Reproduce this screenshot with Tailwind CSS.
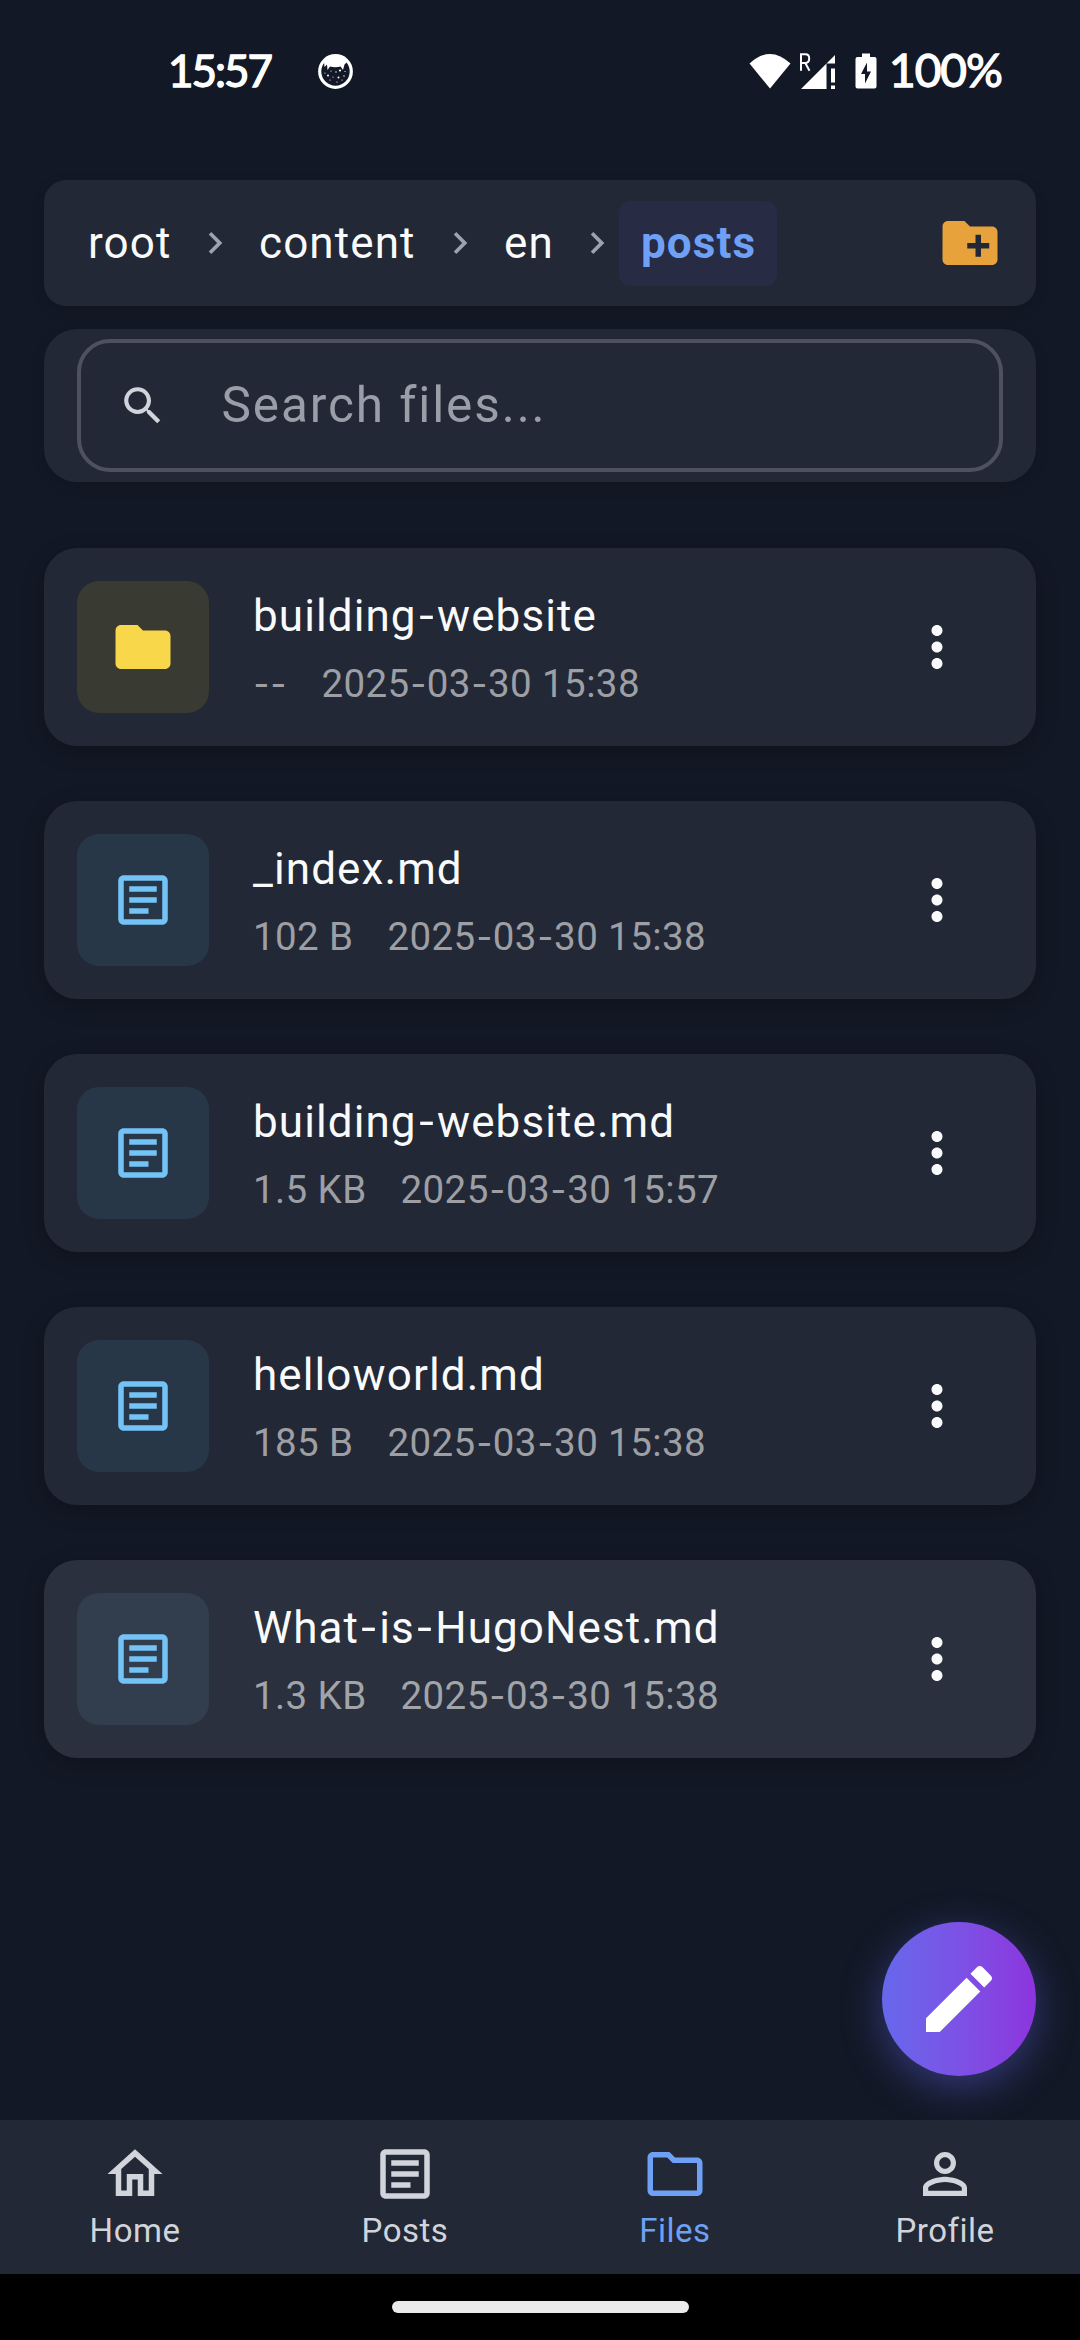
<!DOCTYPE html>
<html lang="en">
<head>
<meta charset="utf-8">
<title>Files</title>
<script src="https://cdn.jsdelivr.net/npm/@tailwindcss/browser@4"></script>
</head>
<body class="bg-[#121825]">
<svg class="hidden">
  <symbol id="article" viewBox="0 0 24 24"><path d="M19 5v14H5V5h14m0-2H5c-1.100 0-2 .9-2 2v14c0 1.100.9 2 2 2h14c1.100 0 2-.9 2-2V5c0-1.100-.9-2-2-2zM14 17H7v-2h7v2zm3-4H7v-2h10v2zm0-4H7V7h10v2z" fill="currentColor"/></symbol>
  <symbol id="more" viewBox="0 0 24 24"><path d="M12 8c1.100 0 2-.9 2-2s-.9-2-2-2-2 .9-2 2 .9 2 2 2zm0 2c-1.100 0-2 .9-2 2s.9 2 2 2 2-.9 2-2-.9-2-2-2zm0 6c-1.100 0-2 .9-2 2s.9 2 2 2 2-.9 2-2-.9-2-2-2z" fill="currentColor"/></symbol>
  <symbol id="chevron" viewBox="0 0 24 24"><path d="M10 6L8.590 7.410 13.170 12l-4.580 4.590L10 18l6-6z" fill="currentColor"/></symbol>
</svg>
<div class="relative flex h-[2340px] w-[1080px] flex-col overflow-hidden bg-[#121825] font-['Roboto',sans-serif] tracking-[0.4px] text-[#f9fafb]">

  <!-- Status bar -->
  <header class="flex h-[180px] shrink-0 items-start justify-between pt-[44px] pr-[74px] pl-[168px] font-['Lato',sans-serif] text-white">
    <div class="flex h-[54px] items-center">
      <span class="-mt-[2px] w-[149px] text-[44px] leading-[54px] font-normal tracking-[-2px] [-webkit-text-stroke:1.3px_white]">15:57</span>
      <svg class="size-[37px]" viewBox="0 0 37 37">
        <circle cx="18.500" cy="18.500" r="15.800" fill="none" stroke="white" stroke-width="3.200"/>
        <path d="M7 9Q18.500-3 30 9L27.500 11.500 26 17 23.500 13.500Q18.500 15 13 13.500L10.500 17 10 11.500 7.500 14Z" fill="white"/>
        <g fill="white"><circle cx="11" cy="22.500" r="1"/><circle cx="23" cy="17.500" r="1.100"/><circle cx="21.500" cy="24.500" r="1"/><circle cx="16" cy="24" r=".6"/><circle cx="19" cy="19" r=".7"/><circle cx="27" cy="23" r=".7"/><circle cx="13" cy="27" r=".6"/><circle cx="20" cy="29" r=".6"/><circle cx="14" cy="18" r=".6"/><circle cx="28" cy="18.500" r=".6"/><circle cx="8" cy="20" r=".6"/><circle cx="25" cy="27" r=".6"/></g>
      </svg>
    </div>
    <div class="flex h-[54px] items-center">
      <svg class="h-[36px] w-[42px]" viewBox="0 0 42 36"><path d="M.5 10.500Q21-8.500 41.500 10.500L21 35.500Z" fill="white"/></svg>
      <svg class="ml-[7px] h-[38px] w-[38px]" viewBox="0 0 38 38">
        <path d="M3 37L28.500 11.500V37ZM28.500 11.500L37 3V11.500Z" fill="white"/>
        <path d="M33 16.500h4v14h-4zM33 33.500h4V37h-4z" fill="white"/>
        <path d="M3 18.800V2.200H7.500Q11.200 2.200 11.200 6.500T7.500 11H3M7.300 11L11.500 18.800" fill="none" stroke="white" stroke-width="2"/>
      </svg>
      <svg class="ml-[19px] h-[36px] w-[22px]" viewBox="0 0 22 36"><path d="M7 .5h8V4h4.500Q21.500 4 21.500 6V33.500Q21.500 35.500 19.500 35.500H2.500Q.5 35.500 .5 33.500V6Q.5 4 2.500 4H7Z" fill="white"/><path d="M12 9.500L6 21h4v9.500L16 18.500h-4Z" fill="#121825"/></svg>
      <span class="-mt-[2px] ml-[12px] w-[117px] text-[46px] leading-[54px] font-normal tracking-[-1px] whitespace-nowrap [-webkit-text-stroke:1.3px_white]">100%</span>
    </div>
  </header>

  <!-- Breadcrumbs -->
  <nav class="mx-[44px] flex h-[126px] shrink-0 items-center rounded-[22px] bg-[#222835] px-[22px] text-[44px] leading-[52px] tracking-[1.1px] shadow-[0_4px_14px_rgba(0,0,0,0.12)]">
    <span class="w-[127px] px-[22px]">root</span>
    <svg class="size-[44px] text-[#9ca3af]"><use href="#chevron"/></svg>
    <span class="w-[201px] px-[22px]">content</span>
    <svg class="size-[44px] text-[#9ca3af]"><use href="#chevron"/></svg>
    <span class="w-[93px] px-[22px]">en</span>
    <svg class="size-[44px] text-[#9ca3af]"><use href="#chevron"/></svg>
    <span class="h-[85px] w-[158px] rounded-[11px] bg-[#272b44] px-[22px] leading-[85px] font-bold text-[#6ea1f5]">posts</span>
    <svg class="mr-[11px] ml-auto size-[66px]" viewBox="0 0 24 24"><path fill="#e8a23b" d="M20 6h-8l-2-2H4c-1.110 0-1.990.89-1.990 2L2 18c0 1.110.89 2 2 2h16c1.110 0 2-.89 2-2V8c0-1.110-.89-2-2-2zm-1 8h-3v3h-2v-3h-3v-2h3V9h2v3h3v2z"/></svg>
  </nav>

  <!-- Search -->
  <section class="mx-[44px] mt-[23px] h-[153px] shrink-0 rounded-[33px] bg-[#222835] px-[33px] py-[10px] shadow-[0_4px_14px_rgba(0,0,0,0.12)]">
    <div class="flex h-[133px] items-center rounded-[33px] border-4 border-[#4d525e] pl-[37px]">
      <svg class="size-[49.5px]" viewBox="0 0 24 24"><path fill="#d1d5db" d="M15.500 14h-.79l-.28-.27C15.410 12.590 16 11.110 16 9.500 16 5.910 13.090 3 9.500 3S3 5.910 3 9.500 5.910 16 9.500 16c1.610 0 3.090-.59 4.230-1.570l.27.28v.79l5 4.990L20.490 19l-4.990-5zm-6 0C7.010 14 5 11.990 5 9.500S7.010 5 9.500 5 14 7.010 14 9.500 11.990 14 9.500 14z"/></svg>
      <span class="-mt-[2px] ml-[54px] text-[49.5px] leading-[60px] tracking-[1.9px] text-[#9a9ea9]">Search files...</span>
    </div>
  </section>

  <!-- File list -->
  <main id="files" class="mx-[44px] mt-[66px] flex flex-col gap-[55px]">
    <article class="flex h-[198px] items-center rounded-[33px] bg-[#222835] px-[33px] shadow-[0_6px_22px_rgba(0,0,0,0.22)]">
      <div class="flex size-[132px] items-center justify-center rounded-[22px] bg-[#393a32]"><svg class="size-[66px]" viewBox="0 0 24 24"><path fill="#f8d74a" d="M10 4H4c-1.100 0-1.990.9-1.990 2L2 18c0 1.100.9 2 2 2h16c1.100 0 2-.9 2-2V8c0-1.100-.9-2-2-2h-8l-2-2z"/></svg></div>
      <div class="ml-[44px] flex-1"><h2 class="text-[44px] leading-[66px] tracking-[1.1px]">building-website</h2><p class="mt-[7px] flex gap-[34px] text-[38.5px] leading-[55px] text-[#9d9fa5]"><span>--</span><span>2025-03-30 15:38</span></p></div>
      <svg class="mr-[33px] size-[66px]"><use href="#more"/></svg>
    </article>
    <article class="flex h-[198px] items-center rounded-[33px] bg-[#222835] px-[33px] shadow-[0_6px_22px_rgba(0,0,0,0.22)]">
      <div class="flex size-[132px] items-center justify-center rounded-[22px] bg-[#283747] text-[#74c3f7]"><svg class="size-[66px]"><use href="#article"/></svg></div>
      <div class="ml-[44px] flex-1"><h2 class="text-[44px] leading-[66px] tracking-[1.1px]">_index.md</h2><p class="mt-[7px] flex gap-[34px] text-[38.5px] leading-[55px] text-[#9d9fa5]"><span>102 B</span><span>2025-03-30 15:38</span></p></div>
      <svg class="mr-[33px] size-[66px]"><use href="#more"/></svg>
    </article>
    <article class="flex h-[198px] items-center rounded-[33px] bg-[#222835] px-[33px] shadow-[0_6px_22px_rgba(0,0,0,0.22)]">
      <div class="flex size-[132px] items-center justify-center rounded-[22px] bg-[#283747] text-[#74c3f7]"><svg class="size-[66px]"><use href="#article"/></svg></div>
      <div class="ml-[44px] flex-1"><h2 class="text-[44px] leading-[66px] tracking-[1.1px]">building-website.md</h2><p class="mt-[7px] flex gap-[34px] text-[38.5px] leading-[55px] text-[#9d9fa5]"><span>1.5 KB</span><span>2025-03-30 15:57</span></p></div>
      <svg class="mr-[33px] size-[66px]"><use href="#more"/></svg>
    </article>
    <article class="flex h-[198px] items-center rounded-[33px] bg-[#222835] px-[33px] shadow-[0_6px_22px_rgba(0,0,0,0.22)]">
      <div class="flex size-[132px] items-center justify-center rounded-[22px] bg-[#283747] text-[#74c3f7]"><svg class="size-[66px]"><use href="#article"/></svg></div>
      <div class="ml-[44px] flex-1"><h2 class="text-[44px] leading-[66px] tracking-[1.1px]">helloworld.md</h2><p class="mt-[7px] flex gap-[34px] text-[38.5px] leading-[55px] text-[#9d9fa5]"><span>185 B</span><span>2025-03-30 15:38</span></p></div>
      <svg class="mr-[33px] size-[66px]"><use href="#more"/></svg>
    </article>
    <article class="flex h-[198px] items-center rounded-[33px] bg-[#2a303d] px-[33px] shadow-[0_6px_22px_rgba(0,0,0,0.22)]">
      <div class="flex size-[132px] items-center justify-center rounded-[22px] bg-[#323e4e] text-[#74c3f7]"><svg class="size-[66px]"><use href="#article"/></svg></div>
      <div class="ml-[44px] flex-1"><h2 class="text-[44px] leading-[66px] tracking-[1.1px]">What-is-HugoNest.md</h2><p class="mt-[7px] flex gap-[34px] text-[38.5px] leading-[55px] text-[#a1a4a9]"><span>1.3 KB</span><span>2025-03-30 15:38</span></p></div>
      <svg class="mr-[33px] size-[66px]"><use href="#more"/></svg>
    </article>
  </main>

  <!-- Floating edit button -->
  <button class="absolute top-[1922px] right-[44px] flex size-[154px] items-center justify-center rounded-full bg-linear-to-r from-[#6568ec] to-[#8c34de] shadow-[0_11px_42px_rgba(99,102,241,0.42)]">
    <svg class="size-[88px]" viewBox="0 0 24 24"><path fill="white" d="M3 17.250V21h3.750L17.810 9.940l-3.750-3.750L3 17.250zM20.710 7.040c.39-.39.39-1.020 0-1.410l-2.340-2.340c-.39-.39-1.020-.39-1.410 0l-1.830 1.830 3.750 3.750 1.830-1.830z"/></svg>
  </button>

  <!-- Bottom navigation -->
  <nav class="relative mt-auto grid h-[154px] shrink-0 grid-cols-4 bg-[#222835] pt-[21px] text-[33px] leading-[40px] tracking-[0.5px] text-[#d1d4da]">
    <a class="flex flex-col items-center gap-[4px]"><svg class="size-[66px]" viewBox="0 0 24 24"><path fill="currentColor" d="M12 5.690l5 4.500V18h-2v-6H9v6H7v-7.810l5-4.500M12 3L2 12h3v8h6v-6h2v6h6v-8h3L12 3z"/></svg>Home</a>
    <a class="flex flex-col items-center gap-[4px]"><svg class="size-[66px]"><use href="#article"/></svg>Posts</a>
    <a class="flex flex-col items-center gap-[4px] text-[#6ea1f5]"><svg class="size-[66px]" viewBox="0 0 24 24"><path fill="currentColor" d="M9.170 6l2 2H20v10H4V6h5.170M10 4H4c-1.100 0-1.990.9-1.990 2L2 18c0 1.100.9 2 2 2h16c1.100 0 2-.9 2-2V8c0-1.100-.9-2-2-2h-8l-2-2z"/></svg>Files</a>
    <a class="flex flex-col items-center gap-[4px]"><svg class="size-[66px]" viewBox="0 0 24 24"><path fill="currentColor" d="M12 5.900c1.160 0 2.100.94 2.100 2.100s-.94 2.100-2.100 2.100S9.900 9.160 9.900 8s.94-2.100 2.100-2.100m0 9c2.970 0 6.100 1.460 6.100 2.100v1.100H5.900V17c0-.64 3.130-2.100 6.100-2.100M12 4C9.790 4 8 5.790 8 8s1.790 4 4 4 4-1.790 4-4-1.790-4-4-4zm0 9c-2.670 0-8 1.340-8 4v3h16v-3c0-2.660-5.330-4-8-4z"/></svg>Profile</a>
  </nav>
  <footer class="relative flex h-[66px] shrink-0 justify-center bg-black pt-[27px]"><div class="h-[12px] w-[297px] rounded-full bg-[#ebebeb]"></div></footer>
</div>
<script>
  // Widen the hyphens in file names and dates
  document.querySelectorAll('#files h2, #files p > span').forEach(el => {
    el.innerHTML = el.textContent.replace(/-/g, '<span class="inline-block scale-x-120 px-[0.08em]">-</span>');
  });
</script>
</body>
</html>
